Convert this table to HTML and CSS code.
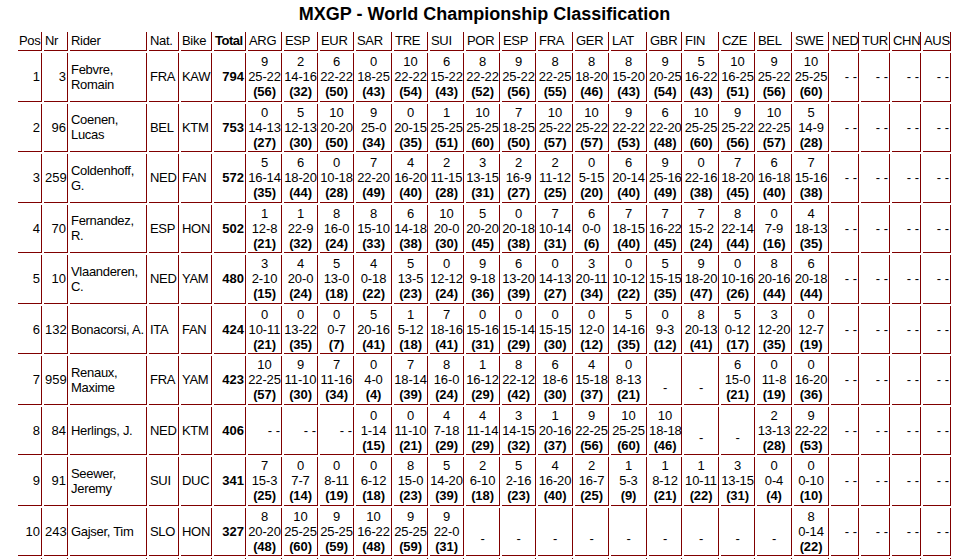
FILE: index.html
```html
<!DOCTYPE html>
<html lang="en">
<head>
<meta charset="utf-8">
<title>MXGP - World Championship Classification</title>
<link rel="stylesheet" href="styles.css">
</head>
<body>
<div class="wrap">
<h1>MXGP - World Championship Classification</h1>
<table class="standings">
<thead>
<tr>
<th class="w24">Pos</th><th class="w24">Nr</th><th class="w77">Rider</th><th class="w30">Nat.</th><th class="w31">Bike</th><th class="w32 tot">Total</th>
<th class="w34">ARG</th><th class="w34">ESP</th><th class="w34">EUR</th><th class="w36">SAR</th><th class="w34">TRE</th><th class="w34">SUI</th><th class="w34">POR</th><th class="w34">ESP</th><th class="w35">FRA</th><th class="w34">GER</th><th class="w36">LAT</th><th class="w33">GBR</th><th class="w35">FIN</th><th class="w34">CZE</th><th class="w35">BEL</th><th class="w35">SWE</th><th class="w28">NED</th><th class="w29">TUR</th><th class="w29">CHN</th><th class="w28">AUS</th>
</tr>
</thead>
<tbody>
<tr>
<td class="num">1</td><td class="num">3</td><td class="rider">Febvre,<br>Romain</td><td class="code">FRA</td><td class="code">KAW</td><td class="tot">794</td>
<td class="race">9<br>25-22<br><b>(56)</b></td><td class="race">2<br>14-16<br><b>(32)</b></td><td class="race">6<br>22-22<br><b>(50)</b></td><td class="race">0<br>18-25<br><b>(43)</b></td><td class="race">10<br>22-22<br><b>(54)</b></td><td class="race">6<br>15-22<br><b>(43)</b></td><td class="race">8<br>22-22<br><b>(52)</b></td><td class="race">9<br>25-22<br><b>(56)</b></td><td class="race">8<br>22-25<br><b>(55)</b></td><td class="race">8<br>18-20<br><b>(46)</b></td><td class="race">8<br>15-20<br><b>(43)</b></td><td class="race">9<br>20-25<br><b>(54)</b></td><td class="race">5<br>16-22<br><b>(43)</b></td><td class="race">10<br>16-25<br><b>(51)</b></td><td class="race">9<br>25-22<br><b>(56)</b></td><td class="race">10<br>25-25<br><b>(60)</b></td>
<td class="none">- -</td><td class="none">- -</td><td class="none">- -</td><td class="none">- -</td>
</tr>
<tr>
<td class="num">2</td><td class="num">96</td><td class="rider">Coenen,<br>Lucas</td><td class="code">BEL</td><td class="code">KTM</td><td class="tot">753</td>
<td class="race">0<br>14-13<br><b>(27)</b></td><td class="race">5<br>12-13<br><b>(30)</b></td><td class="race">10<br>20-20<br><b>(50)</b></td><td class="race">9<br>25-0<br><b>(34)</b></td><td class="race">0<br>20-15<br><b>(35)</b></td><td class="race">1<br>25-25<br><b>(51)</b></td><td class="race">10<br>25-25<br><b>(60)</b></td><td class="race">7<br>18-25<br><b>(50)</b></td><td class="race">10<br>25-22<br><b>(57)</b></td><td class="race">10<br>25-22<br><b>(57)</b></td><td class="race">9<br>22-22<br><b>(53)</b></td><td class="race">6<br>22-20<br><b>(48)</b></td><td class="race">10<br>25-25<br><b>(60)</b></td><td class="race">9<br>25-22<br><b>(56)</b></td><td class="race">10<br>22-25<br><b>(57)</b></td><td class="race">5<br>14-9<br><b>(28)</b></td>
<td class="none">- -</td><td class="none">- -</td><td class="none">- -</td><td class="none">- -</td>
</tr>
<tr>
<td class="num">3</td><td class="num">259</td><td class="rider">Coldenhoff,<br>G.</td><td class="code">NED</td><td class="code">FAN</td><td class="tot">572</td>
<td class="race">5<br>16-14<br><b>(35)</b></td><td class="race">6<br>18-20<br><b>(44)</b></td><td class="race">0<br>10-18<br><b>(28)</b></td><td class="race">7<br>22-20<br><b>(49)</b></td><td class="race">4<br>16-20<br><b>(40)</b></td><td class="race">2<br>11-15<br><b>(28)</b></td><td class="race">3<br>13-15<br><b>(31)</b></td><td class="race">2<br>16-9<br><b>(27)</b></td><td class="race">2<br>11-12<br><b>(25)</b></td><td class="race">0<br>5-15<br><b>(20)</b></td><td class="race">6<br>20-14<br><b>(40)</b></td><td class="race">9<br>25-16<br><b>(49)</b></td><td class="race">0<br>22-16<br><b>(38)</b></td><td class="race">7<br>18-20<br><b>(45)</b></td><td class="race">6<br>16-18<br><b>(40)</b></td><td class="race">7<br>15-16<br><b>(38)</b></td>
<td class="none">- -</td><td class="none">- -</td><td class="none">- -</td><td class="none">- -</td>
</tr>
<tr>
<td class="num">4</td><td class="num">70</td><td class="rider">Fernandez,<br>R.</td><td class="code">ESP</td><td class="code">HON</td><td class="tot">502</td>
<td class="race">1<br>12-8<br><b>(21)</b></td><td class="race">1<br>22-9<br><b>(32)</b></td><td class="race">8<br>16-0<br><b>(24)</b></td><td class="race">8<br>15-10<br><b>(33)</b></td><td class="race">6<br>14-18<br><b>(38)</b></td><td class="race">10<br>20-0<br><b>(30)</b></td><td class="race">5<br>20-20<br><b>(45)</b></td><td class="race">0<br>20-18<br><b>(38)</b></td><td class="race">7<br>10-14<br><b>(31)</b></td><td class="race">6<br>0-0<br><b>(6)</b></td><td class="race">7<br>18-15<br><b>(40)</b></td><td class="race">7<br>16-22<br><b>(45)</b></td><td class="race">7<br>15-2<br><b>(24)</b></td><td class="race">8<br>22-14<br><b>(44)</b></td><td class="race">0<br>7-9<br><b>(16)</b></td><td class="race">4<br>18-13<br><b>(35)</b></td>
<td class="none">- -</td><td class="none">- -</td><td class="none">- -</td><td class="none">- -</td>
</tr>
<tr>
<td class="num">5</td><td class="num">10</td><td class="rider">Vlaanderen,<br>C.</td><td class="code">NED</td><td class="code">YAM</td><td class="tot">480</td>
<td class="race">3<br>2-10<br><b>(15)</b></td><td class="race">4<br>20-0<br><b>(24)</b></td><td class="race">5<br>13-0<br><b>(18)</b></td><td class="race">4<br>0-18<br><b>(22)</b></td><td class="race">5<br>13-5<br><b>(23)</b></td><td class="race">0<br>12-12<br><b>(24)</b></td><td class="race">9<br>9-18<br><b>(36)</b></td><td class="race">6<br>13-20<br><b>(39)</b></td><td class="race">0<br>14-13<br><b>(27)</b></td><td class="race">3<br>20-11<br><b>(34)</b></td><td class="race">0<br>10-12<br><b>(22)</b></td><td class="race">5<br>15-15<br><b>(35)</b></td><td class="race">9<br>18-20<br><b>(47)</b></td><td class="race">0<br>10-16<br><b>(26)</b></td><td class="race">8<br>20-16<br><b>(44)</b></td><td class="race">6<br>20-18<br><b>(44)</b></td>
<td class="none">- -</td><td class="none">- -</td><td class="none">- -</td><td class="none">- -</td>
</tr>
<tr>
<td class="num">6</td><td class="num">132</td><td class="rider">Bonacorsi, A.</td><td class="code">ITA</td><td class="code">FAN</td><td class="tot">424</td>
<td class="race">0<br>10-11<br><b>(21)</b></td><td class="race">0<br>13-22<br><b>(35)</b></td><td class="race">0<br>0-7<br><b>(7)</b></td><td class="race">5<br>20-16<br><b>(41)</b></td><td class="race">1<br>5-12<br><b>(18)</b></td><td class="race">7<br>18-16<br><b>(41)</b></td><td class="race">0<br>15-16<br><b>(31)</b></td><td class="race">0<br>15-14<br><b>(29)</b></td><td class="race">0<br>15-15<br><b>(30)</b></td><td class="race">0<br>12-0<br><b>(12)</b></td><td class="race">5<br>14-16<br><b>(35)</b></td><td class="race">0<br>9-3<br><b>(12)</b></td><td class="race">8<br>20-13<br><b>(41)</b></td><td class="race">5<br>0-12<br><b>(17)</b></td><td class="race">3<br>12-20<br><b>(35)</b></td><td class="race">0<br>12-7<br><b>(19)</b></td>
<td class="none">- -</td><td class="none">- -</td><td class="none">- -</td><td class="none">- -</td>
</tr>
<tr>
<td class="num">7</td><td class="num">959</td><td class="rider">Renaux,<br>Maxime</td><td class="code">FRA</td><td class="code">YAM</td><td class="tot">423</td>
<td class="race">10<br>22-25<br><b>(57)</b></td><td class="race">9<br>11-10<br><b>(30)</b></td><td class="race">7<br>11-16<br><b>(34)</b></td><td class="race">0<br>4-0<br><b>(4)</b></td><td class="race">7<br>18-14<br><b>(39)</b></td><td class="race">8<br>16-0<br><b>(24)</b></td><td class="race">1<br>16-12<br><b>(29)</b></td><td class="race">8<br>22-12<br><b>(42)</b></td><td class="race">6<br>18-6<br><b>(30)</b></td><td class="race">4<br>15-18<br><b>(37)</b></td><td class="race">0<br>8-13<br><b>(21)</b></td><td class="race">&nbsp;<br>-</td><td class="race">&nbsp;<br>-</td><td class="race">6<br>15-0<br><b>(21)</b></td><td class="race">0<br>11-8<br><b>(19)</b></td><td class="race">0<br>16-20<br><b>(36)</b></td>
<td class="none">- -</td><td class="none">- -</td><td class="none">- -</td><td class="none">- -</td>
</tr>
<tr>
<td class="num">8</td><td class="num">84</td><td class="rider">Herlings, J.</td><td class="code">NED</td><td class="code">KTM</td><td class="tot">406</td>
<td class="none">- -</td><td class="none">- -</td><td class="none">- -</td><td class="race">0<br>1-14<br><b>(15)</b></td><td class="race">0<br>11-10<br><b>(21)</b></td><td class="race">4<br>7-18<br><b>(29)</b></td><td class="race">4<br>11-14<br><b>(29)</b></td><td class="race">3<br>14-15<br><b>(32)</b></td><td class="race">1<br>20-16<br><b>(37)</b></td><td class="race">9<br>22-25<br><b>(56)</b></td><td class="race">10<br>25-25<br><b>(60)</b></td><td class="race">10<br>18-18<br><b>(46)</b></td><td class="race">&nbsp;<br>-</td><td class="race">&nbsp;<br>-</td><td class="race">2<br>13-13<br><b>(28)</b></td><td class="race">9<br>22-22<br><b>(53)</b></td>
<td class="none">- -</td><td class="none">- -</td><td class="none">- -</td><td class="none">- -</td>
</tr>
<tr>
<td class="num">9</td><td class="num">91</td><td class="rider">Seewer,<br>Jeremy</td><td class="code">SUI</td><td class="code">DUC</td><td class="tot">341</td>
<td class="race">7<br>15-3<br><b>(25)</b></td><td class="race">0<br>7-7<br><b>(14)</b></td><td class="race">0<br>8-11<br><b>(19)</b></td><td class="race">0<br>6-12<br><b>(18)</b></td><td class="race">8<br>15-0<br><b>(23)</b></td><td class="race">5<br>14-20<br><b>(39)</b></td><td class="race">2<br>6-10<br><b>(18)</b></td><td class="race">5<br>2-16<br><b>(23)</b></td><td class="race">4<br>16-20<br><b>(40)</b></td><td class="race">2<br>16-7<br><b>(25)</b></td><td class="race">1<br>5-3<br><b>(9)</b></td><td class="race">1<br>8-12<br><b>(21)</b></td><td class="race">1<br>10-11<br><b>(22)</b></td><td class="race">3<br>13-15<br><b>(31)</b></td><td class="race">0<br>0-4<br><b>(4)</b></td><td class="race">0<br>0-10<br><b>(10)</b></td>
<td class="none">- -</td><td class="none">- -</td><td class="none">- -</td><td class="none">- -</td>
</tr>
<tr>
<td class="num">10</td><td class="num">243</td><td class="rider">Gajser, Tim</td><td class="code">SLO</td><td class="code">HON</td><td class="tot">327</td>
<td class="race">8<br>20-20<br><b>(48)</b></td><td class="race">10<br>25-25<br><b>(60)</b></td><td class="race">9<br>25-25<br><b>(59)</b></td><td class="race">10<br>16-22<br><b>(48)</b></td><td class="race">9<br>25-25<br><b>(59)</b></td><td class="race">9<br>22-0<br><b>(31)</b></td><td class="race">&nbsp;<br>-</td><td class="race">&nbsp;<br>-</td><td class="race">&nbsp;<br>-</td><td class="race">&nbsp;<br>-</td><td class="race">&nbsp;<br>-</td><td class="race">&nbsp;<br>-</td><td class="race">&nbsp;<br>-</td><td class="race">&nbsp;<br>-</td><td class="race">&nbsp;<br>-</td><td class="race">8<br>0-14<br><b>(22)</b></td>
<td class="none">- -</td><td class="none">- -</td><td class="none">- -</td><td class="none">- -</td>
</tr>
<tr class="more">
<td></td><td></td><td></td><td></td><td></td><td></td>
<td></td><td></td><td></td><td></td><td></td><td></td><td></td><td></td><td></td><td></td><td></td><td></td><td></td><td></td><td></td><td></td>
<td></td><td></td><td></td><td></td>
</tr>
</tbody>
</table>
</div>
</body>
</html>
```

FILE: styles.css
```css
html, body {
  margin: 0;
  padding: 0;
  background: #ffffff;
}

body {
  font-family: "Liberation Sans", Arial, sans-serif;
  font-size: 13px;
  color: #000000;
}

.wrap {
  width: 937px;
  margin-left: 16px;
}

h1 {
  margin: 4px 0 5px;
  font-size: 18px;
  line-height: 21px;
  font-weight: bold;
  text-align: center;
}

.standings {
  width: 937px;
  table-layout: fixed;
  border-collapse: separate;
  border-spacing: 2px;
}

.standings th,
.standings td {
  box-sizing: border-box;
  border-right: 1px solid #800000;
  border-bottom: 1px solid #800000;
  padding: 1px;
  vertical-align: middle;
  white-space: nowrap;
  overflow: visible;
}

.standings th {
  font-weight: normal;
  text-align: left;
  line-height: 16px;
  letter-spacing: -0.3px;
}

.standings th.tot {
  font-weight: bold;
  letter-spacing: -0.5px;
}

.standings td {
  line-height: 15.17px;
}

.w24 { width: 24px; }
.w28 { width: 28px; }
.w29 { width: 29px; }
.w30 { width: 30px; }
.w31 { width: 31px; }
.w32 { width: 32px; }
.w33 { width: 33px; }
.w34 { width: 34px; }
.w35 { width: 35px; }
.w36 { width: 36px; }
.w77 { width: 77px; }

.standings td.num {
  text-align: right;
}

.standings td.rider {
  text-align: left;
  letter-spacing: -0.3px;
}

.standings td.code {
  text-align: left;
  letter-spacing: -0.3px;
}

.standings td.tot {
  text-align: right;
  font-weight: bold;
}

.standings td.race {
  text-align: center;
  padding-left: 0;
  padding-right: 0;
  letter-spacing: -0.1px;
}

.standings td.none {
  text-align: right;
}

.standings tr.more td {
  height: 48px;
}
```
